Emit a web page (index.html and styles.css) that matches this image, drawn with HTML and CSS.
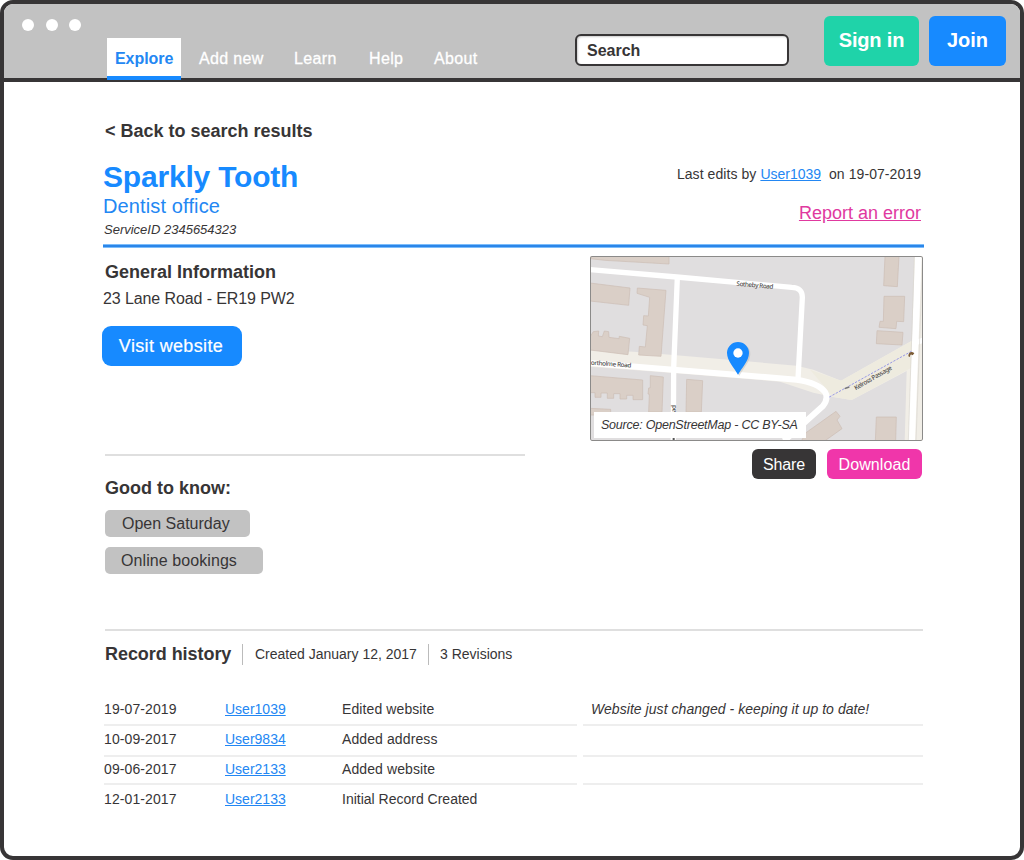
FILE: index.html
```html
<!DOCTYPE html>
<html lang="en">
<head>
<meta charset="utf-8">
<title>Sparkly Tooth</title>
<link rel="stylesheet" href="styles.css">
</head>
<body>
<div class="window">
  <header class="topbar">
    <div class="dots"><i></i><i></i><i></i></div>
    <nav class="nav">
      <a class="tab">Explore</a><a>Add new</a><a>Learn</a><a>Help</a><a>About</a>
    </nav>
    <div class="search">Search</div>
    <div class="account">
      <a class="signin">Sign in</a>
      <a class="join">Join</a>
    </div>
  </header>
  <main class="page">
    <a class="back">&lt; Back to search results</a>
    <section class="heading">
      <div>
        <h1 class="title">Sparkly Tooth</h1>
        <div class="kind">Dentist office</div>
        <div class="service-id">ServiceID 2345654323</div>
      </div>
      <div class="edits">
        <div class="last-edit">Last edits by <a class="link">User1039</a>&nbsp; on 19-07-2019</div>
        <a class="report">Report an error</a>
      </div>
    </section>
    <section class="details">
      <div class="info">
        <h2>General Information</h2>
        <p class="address">23 Lane Road - ER19 PW2</p>
        <a class="visit">Visit website</a>
        <div class="know">
          <h2>Good to know:</h2>
          <div class="pill pill-saturday">Open Saturday</div>
          <div class="pill pill-online">Online bookings</div>
        </div>
      </div>
      <div class="side">
        <div class="map">
          <svg class="map-art" viewBox="30 33 999 555" width="333" height="185">
            <rect x="30" y="33" width="999" height="555" fill="#e0dedf"/>
            <g fill="#f1eee7">
              <path d="M30 315L160 320L280 330L650 362L700 374L783 407L1000 285L1002 33H1029V588H974L980 378L815 465L760 456L700 443L600 410L280 384L30 365Z"/>
            </g>
            <path d="M690 374L783 407L1000 285L998 366L815 465L760 456Z" fill="#eeebdf"/>
            <g fill="#dacfc7" stroke="#cbbdb3" stroke-width="2">
              <path d="M30 33H267V57L75 46L30 41Z"/>
              <path d="M30 114L150 129L146 181L30 168Z"/>
              <path d="M172 129L258 136L243 334L176 330L178 304L196 306L202 242L189 240L191 212L205 213L209 157L171 145Z"/>
              <path d="M30 275L40 260L56 258L55 273L67 275L73 258L86 260L87 277L117 281L118 274L149 280L144 329L30 315Z"/>
              <path d="M30 392L188 405V464H159V451H140V462H120V446H101V460H82V444H63V457H45V443H30Z"/>
              <path d="M211 392L250 396L246 501H206L208 448L204 447L206 429L211 428Z"/>
              <path d="M320 403L368 407L364 501H318Z"/>
              <path d="M30 490L92 493V510H30Z"/>
              <path d="M915 33H957L952 125L911 122Z"/>
              <path d="M912 154H974L971 230L950 229L948 251L897 247L900 229L910 229Z"/>
              <path d="M891 257L969 262L966 300L889 296Z"/>
              <path d="M889 516H949L947 588H886Z"/>
              <path d="M768 499L780 514L771 525L786 551L734 588H664L678 563Z"/>
            </g>
            <g fill="none" stroke="#fff" stroke-width="16" stroke-linejoin="round">
              <path d="M30 74L290 96L635 127Q668 128 667 158L654 403"/>
              <path d="M292 98L281 370L280 588"/>
              <path d="M30 354L280 374L650 404Q716 414 735 441Q747 460 728 484L612 588" stroke-width="18"/>
              <path d="M1015 33L995 588" stroke-width="20"/>
              <path d="M1003 294L1029 286"/>
            </g>
            <path d="M1003 33L985 588M1028 33L1008 588" fill="none" stroke="#d9d6d0" stroke-width="2"/>
            <path d="M748 456L996 318" fill="none" stroke="#8587e6" stroke-width="2.5" stroke-dasharray="7 4"/>
            <path d="M794 431L808 426" stroke="#777" stroke-width="4"/>
            <path d="M985 334C985 321 996 318 1003 325L998 331C992 326 990 329 990 336Z" fill="#7b5b35"/>
            <g class="road-label">
              <text transform="translate(469 122) rotate(5)" textLength="111">Sotheby Road</text>
              <text transform="translate(32 359) rotate(4)" textLength="122">ortholme Road</text>
              <text transform="translate(827 436) rotate(-30)" textLength="127">Kelross Passage</text>
              <text transform="translate(287 502) rotate(-89)" textLength="22">ad</text>
            </g>
            <path d="M278 579H284V588H278Z" fill="#555"/>
            <path d="M478 393C468 373 445 349 445 327A33 33 0 0 1 511 327C511 349 488 373 478 393Z" fill="#aaa" opacity=".35"/>
            <path d="M474 389C463 369 441 347 441 324A33 33 0 0 1 507 324C507 347 485 369 474 389Z" fill="#178aff"/>
            <circle cx="474" cy="324" r="14" fill="#fff"/>
          </svg>
          <div class="source">Source: OpenStreetMap - CC BY-SA</div>
        </div>
        <div class="actions"><a class="share">Share</a><a class="download">Download</a></div>
      </div>
    </section>
    <section class="history">
      <div class="history-head">
        <h2>Record history</h2>
        <span class="created">Created January 12, 2017</span>
        <span class="revisions">3 Revisions</span>
      </div>
      <div class="row row-1"><div class="entry"><span>19-07-2019</span><a class="link">User1039</a><span>Edited website</span></div><div class="note">Website just changed - keeping it up to date!</div></div>
      <div class="row row-2"><div class="entry"><span>10-09-2017</span><a class="link">User9834</a><span>Added address</span></div><div class="note"></div></div>
      <div class="row row-3"><div class="entry"><span>09-06-2017</span><a class="link">User2133</a><span>Added website</span></div><div class="note"></div></div>
      <div class="row row-4"><div class="entry"><span>12-01-2017</span><a class="link">User2133</a><span class="initial">Initial Record Created</span></div><div class="note"></div></div>
    </section>
  </main>
</div>
</body>
</html>
```
FILE: styles.css
```css
* { box-sizing: border-box; }
body {
  margin: 0;
  background: #fff;
  color: #373536;
  font-family: "Liberation Sans", Arial, sans-serif;
  font-size: 14px;
}
h1, h2, p { margin: 0; }
h2 { font-size: 18px; line-height: 20px; }
.window {
  height: 860px;
  border: 4px solid #373536;
  border-radius: 13px;
  overflow: hidden;
  background: #fff;
}
.topbar {
  display: flex;
  height: 78px;
  background: #c2c2c2;
  border-bottom: 4px solid #373536;
}
.dots { display: flex; gap: 11.5px; width: 103px; padding: 15px 0 0 18px; }
.dots i { width: 12px; height: 12px; border-radius: 50%; background: #fff; }
.nav {
  display: grid;
  grid-template-columns: 92px 95px 75px 65px 141px;
  height: 42px;
  margin-top: 34px;
  color: #fff;
  font-size: 16px;
  line-height: 17px;
  letter-spacing: .35px;
  -webkit-text-stroke: .3px #fff;
}
.nav a { padding-top: 12px; white-space: nowrap; }
.nav .tab {
  position: relative;
  width: 74px;
  padding-left: 8px;
  background: #fff;
  border-bottom: 4px solid #178aff;
  color: #2387f3;
  font-weight: bold;
  letter-spacing: -.05px;
  -webkit-text-stroke: 0;
}
.search {
  width: 214px;
  height: 32px;
  margin-top: 30px;
  padding-left: 10px;
  background: #fff;
  border: 2px solid #373536;
  border-radius: 6px;
  box-shadow: inset 1px 1px 2px #ccc;
  font-size: 16px;
  font-weight: bold;
  line-height: 29px;
}
.account {
  display: flex;
  gap: 10px;
  margin: 12px 0 0 35px;
  color: #fff;
  font-size: 20px;
  font-weight: bold;
  line-height: 48px;
  text-align: center;
}
.account a { height: 50px; border-radius: 6px; }
.signin { width: 95px; background: #1fd3a9; letter-spacing: -.15px; }
.join { width: 77px; background: #178aff; }
.page { padding: 39px 97px 0 99px; }
.back { display: block; padding-left: 2px; font-size: 18px; font-weight: bold; line-height: 20px; }
.heading {
  display: flex;
  justify-content: space-between;
  width: 821px;
  height: 88px;
  margin: 19px 0 8px;
  background: linear-gradient(#7cbdfb 0 1px, #2b86e9 1px 3px, #7cbdfb 3px) bottom / 100% 4px no-repeat;
}
.title { color: #178aff; font-size: 30px; line-height: 33px; letter-spacing: -.2px; }
.kind { margin-top: 2px; color: #2387f3; font-size: 20px; line-height: 22px; letter-spacing: .13px; }
.service-id { margin: 5px 0 0 1px; font-size: 13px; font-style: italic; line-height: 15px; }
.edits { padding: 6px 3px 0 0; text-align: right; }
.last-edit { line-height: 16px; letter-spacing: .07px; }
.link { color: #2387f3; letter-spacing: 0; text-decoration: underline; }
.report { display: block; margin-top: 21px; color: #e0399f; font-size: 18px; line-height: 20px; text-decoration: underline; }
.details { display: flex; justify-content: space-between; width: 820px; height: 373px; }
.info { width: 422px; padding-top: 6px; }
.info > h2 { padding-left: 2px; }
.address { margin-top: 8px; font-size: 16px; line-height: 17px; letter-spacing: -.1px; }
.visit {
  display: block;
  width: 140px;
  height: 40px;
  margin: 19px 0 0 -1px;
  padding-right: 2px;
  border-radius: 9px;
  background: #178aff;
  color: #fff;
  font-size: 18px;
  line-height: 40px;
  letter-spacing: .35px;
  text-align: center;
  -webkit-text-stroke: .2px #fff;
}
.know { margin: 88px 0 0 2px; padding-top: 22px; border-top: 2px solid #dfdfdf; }
.pill { height: 27px; border-radius: 5px; background: #c2c2c2; font-size: 16px; line-height: 27px; }
.pill-saturday { width: 145px; margin-top: 12px; padding-left: 17px; }
.pill-online { width: 158px; margin-top: 10px; padding-left: 16px; letter-spacing: .08px; }
.side { width: 333px; }
.map { position: relative; height: 185px; border-radius: 2px; overflow: hidden; }
.map::after { content: ""; position: absolute; inset: 0; border: 1px solid #8b8a89; border-radius: 2px; }
.map-art { display: block; }
.road-label {
  font-family: "Noto Sans", sans-serif;
  font-size: 19px;
  font-weight: 500;
  fill: #4b4949;
}
.source {
  position: absolute;
  left: 4px;
  top: 156px;
  width: 212px;
  height: 26px;
  padding-left: 7px;
  background: #fff;
  font-size: 12.5px;
  font-style: italic;
  line-height: 26px;
  letter-spacing: -.23px;
  white-space: nowrap;
}
.actions { display: flex; justify-content: flex-end; gap: 11px; margin-top: 8px; padding-right: 1px; }
.actions a { height: 30px; border-radius: 6px; color: #fff; font-size: 16px; line-height: 31px; text-align: center; }
.share { width: 64px; background: #373536; letter-spacing: -.15px; }
.download { width: 95px; background: #f036aa; letter-spacing: .1px; }
.history { width: 820px; }
.history-head { display: flex; margin-left: 2px; padding-top: 13px; border-top: 2px solid #dfdfdf; }
.history-head h2 { width: 137px; letter-spacing: -.05px; }
.history-head span { height: 21px; border-left: 1px solid #bbb; line-height: 20px; }
.created { width: 186px; padding-left: 12px; }
.revisions { padding-left: 11px; }
.row { display: flex; gap: 6px; padding-left: 1px; line-height: 18px; letter-spacing: .1px; }
.entry { display: grid; grid-template-columns: 121px 117px 1fr; width: 473px; }
.entry span, .entry a { white-space: nowrap; }
.initial { letter-spacing: 0; }
.note { width: 340px; padding-left: 8px; font-style: italic; letter-spacing: .05px; }
.row-1 { height: 26px; margin-top: 35px; }
.row-2 { height: 31px; }
.row-3 { height: 28px; }
.row-1 > div, .row-2 > div, .row-3 > div { border-bottom: 2px solid #eee; }
.row-2 > div { padding-top: 4px; }
.row-3 > div { padding-top: 3px; }
.row-4 > div { padding-top: 5px; }
```
